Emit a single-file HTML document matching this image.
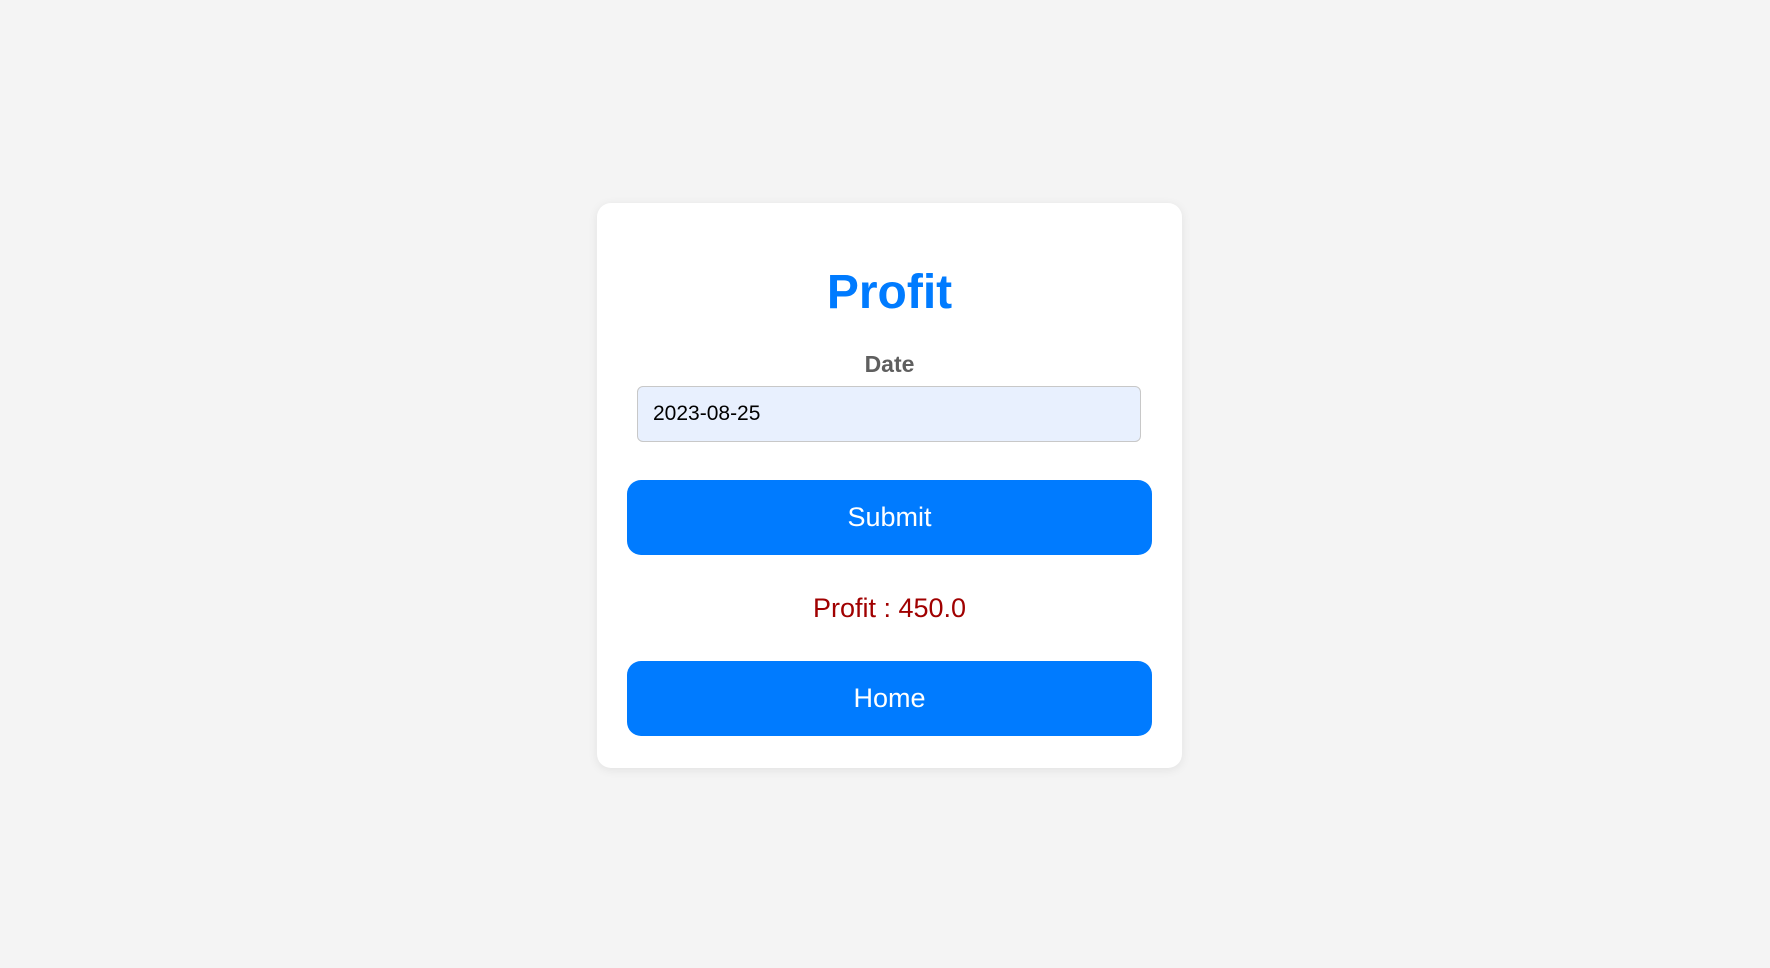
<!DOCTYPE html>
<html><head><style>
html,body{margin:0;padding:0;width:1770px;height:968px;background:#f4f4f4;font-family:"Liberation Sans",Arial,sans-serif;overflow:hidden}
.card{position:absolute;left:597px;top:203px;width:585px;height:565px;background:#fff;border-radius:14px;box-shadow:0 2px 10px rgba(0,0,0,0.08)}
.c{position:absolute;left:597px;width:585px;text-align:center}
h1{top:263px;margin:0;color:#007bff;font-size:48px;font-weight:bold;line-height:60px}
.lbl{top:350px;color:#5f5f5f;font-weight:bold;font-size:23px;line-height:28px}
.inp{position:absolute;left:637px;top:386px;width:504px;height:56px;box-sizing:border-box;border:1px solid #c8c8c8;border-radius:6px;background:#e8f0fe;font-size:21px;line-height:54px;padding-left:15px;color:#000}
.btn{position:absolute;left:627px;width:525px;height:75px;background:#007bff;border-radius:14px;color:#fff;font-size:27px;text-align:center;line-height:75px}
.res{top:591px;color:#a00000;font-size:27px;line-height:34px}
</style></head><body>
<div class="card"></div>
<h1 class="c">Profit</h1>
<div class="c lbl">Date</div>
<div class="inp">2023-08-25</div>
<div class="btn" style="top:480px">Submit</div>
<div class="c res">Profit : 450.0</div>
<div class="btn" style="top:661px">Home</div>
</body></html>
